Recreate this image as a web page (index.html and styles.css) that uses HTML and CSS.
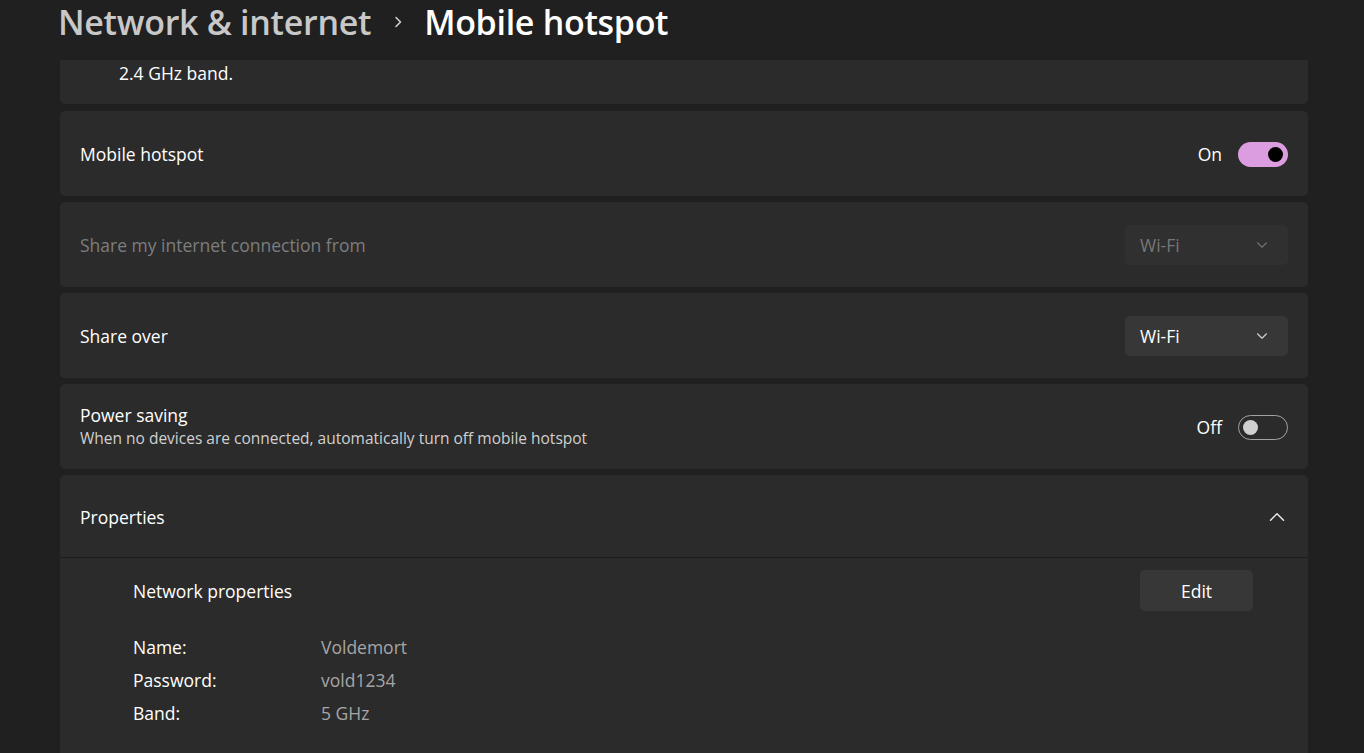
FILE: index.html
```html
<!DOCTYPE html>
<html lang="en">
<head>
<meta charset="utf-8">
<title>Mobile hotspot</title>
<link rel="stylesheet" href="styles.css">
</head>
<body>
<div class="window">
  <header class="header">
    <h1 class="crumbs">
      <span class="crumb-parent">Network &amp; internet</span>
      <svg class="crumb-sep" width="12" height="16" viewBox="0 0 12 16"><path d="M4 3.5 L8.5 8 L4 12.5" fill="none" stroke="#d0d0d0" stroke-width="1.6" stroke-linecap="round" stroke-linejoin="round"/></svg>
      <span class="crumb-current">Mobile hotspot</span>
    </h1>
  </header>
  <main class="scroller">
    <div class="list">
      <section class="card card-info">
        <p class="info-text">2.4 GHz band.</p>
      </section>

      <section class="card row">
        <span class="row-title">Mobile hotspot</span>
        <div class="row-control">
          <span class="state">On</span>
          <span class="toggle toggle-on"><span class="knob"></span></span>
        </div>
      </section>

      <section class="card row">
        <span class="row-title disabled">Share my internet connection from</span>
        <div class="row-control">
          <div class="dropdown dropdown-disabled">
            <span>Wi-Fi</span>
            <svg width="12" height="8" viewBox="0 0 12 8"><path d="M1.5 1.8 L6 6.2 L10.5 1.8" fill="none" stroke="#6e6e6e" stroke-width="1.2" stroke-linecap="round" stroke-linejoin="round"/></svg>
          </div>
        </div>
      </section>

      <section class="card row">
        <span class="row-title">Share over</span>
        <div class="row-control">
          <div class="dropdown">
            <span>Wi-Fi</span>
            <svg width="12" height="8" viewBox="0 0 12 8"><path d="M1.5 1.8 L6 6.2 L10.5 1.8" fill="none" stroke="#cfcfcf" stroke-width="1.2" stroke-linecap="round" stroke-linejoin="round"/></svg>
          </div>
        </div>
      </section>

      <section class="card row">
        <div class="row-text">
          <span class="row-title">Power saving</span>
          <span class="row-desc">When no devices are connected, automatically turn off mobile hotspot</span>
        </div>
        <div class="row-control">
          <span class="state">Off</span>
          <span class="toggle toggle-off"><span class="knob"></span></span>
        </div>
      </section>

      <section class="card expander">
        <div class="row expander-head">
          <span class="row-title">Properties</span>
          <svg class="chev-up" width="16" height="10" viewBox="0 0 16 10"><path d="M1.5 8.2 L8 1.8 L14.5 8.2" fill="none" stroke="#e8e8e8" stroke-width="1.5" stroke-linecap="round" stroke-linejoin="round"/></svg>
        </div>
        <div class="expander-body">
          <div class="props-head">
            <span class="props-title">Network properties</span>
            <button class="btn">Edit</button>
          </div>
          <dl class="props">
            <dt>Name:</dt><dd>Voldemort</dd>
            <dt>Password:</dt><dd>vold1234</dd>
            <dt>Band:</dt><dd>5 GHz</dd>
          </dl>
        </div>
      </section>
    </div>
  </main>
</div>
</body>
</html>
```

FILE: styles.css
```css
* { box-sizing: border-box; }
html, body { margin: 0; padding: 0; }
body {
  background: #202020;
  color: #ffffff;
  font-family: "Open Sans", "Noto Sans", "Liberation Sans", sans-serif;
  font-size: 17.5px;
  overflow: hidden;
}
.window {
  width: 1364px;
  height: 753px;
  display: flex;
  flex-direction: column;
}
.header {
  height: 60px;
  flex: none;
  padding-left: 58px;
  background: #202020;
  position: relative;
  z-index: 2;
}
.crumbs {
  margin: 0;
  display: flex;
  align-items: center;
  font-size: 34px;
  font-weight: 600;
  line-height: 44px;
  letter-spacing: -0.3px;
}
.crumb-parent { color: #c8c8c8; }
.crumb-sep { margin: 0 20px 0 21px; }
.crumb-current { color: #ffffff; }

.scroller {
  flex: 1;
  overflow: hidden;
}
.list {
  width: 1248px;
  margin-left: 60px;
  display: flex;
  flex-direction: column;
  gap: 6px;
}
.card {
  background: #2b2b2b;
  border-radius: 5px;
}
.card-info {
  height: 85px;
  margin-top: -41px;
  margin-bottom: 1px;
  padding: 42px 0 0 59px;
}
.info-text {
  margin: 0;
  font-size: 17.5px;
  line-height: 24px;
}
.row {
  height: 85px;
  display: flex;
  align-items: center;
  justify-content: space-between;
  padding: 1px 20px 0;
}
.row-title { font-size: 17.5px; color: #ffffff; }
.row-title.disabled { color: #7d7d7d; }
.row-text {
  display: flex;
  flex-direction: column;
  gap: 0;
  margin-top: -2px;
}
.row-desc {
  font-size: 15.5px;
  color: #d0d0d0;
}
.row-control {
  display: flex;
  align-items: center;
  gap: 16px;
}
.state { font-size: 17.5px; }
.toggle {
  width: 50px;
  height: 25px;
  border-radius: 13px;
  display: flex;
  align-items: center;
  padding: 0 5px;
}
.toggle .knob {
  width: 15px;
  height: 15px;
  border-radius: 50%;
}
.toggle-on {
  background: #dc9ce0;
  justify-content: flex-end;
}
.toggle-on .knob { background: #000000; }
.toggle-off {
  border: 1px solid #a3a3a3;
  justify-content: flex-start;
  padding: 0 4px;
}
.toggle-off .knob { background: #d0d0d0; }

.dropdown {
  width: 163px;
  height: 40px;
  border-radius: 5px;
  background: #373737;
  display: flex;
  align-items: center;
  justify-content: space-between;
  padding: 0 20px 0 15px;
  font-size: 17.5px;
  color: #ffffff;
}
.dropdown-disabled {
  background: #303030;
  color: #777777;
}

.expander {
  min-height: 300px;
}
.expander-head {
  height: 83px;
  border-bottom: 1px solid #1c1c1c;
  padding-right: 23px;
}
.expander-body {
  padding: 12px 55px 0 73px;
}
.props-head {
  display: flex;
  align-items: center;
  justify-content: space-between;
}
.props-title { font-size: 17.5px; }
.btn {
  width: 113px;
  height: 41px;
  border: none;
  border-radius: 5px;
  background: #373737;
  color: #ffffff;
  font-family: inherit;
  font-size: 17.5px;
  padding: 0;
}
.props {
  margin: 24px 0 0;
  display: grid;
  grid-template-columns: 188px 1fr;
  row-gap: 9px;
  font-size: 17.5px;
  line-height: 24px;
}
.props dt { color: #ffffff; }
.props dd { margin: 0; color: #a6a6a6; }
```
